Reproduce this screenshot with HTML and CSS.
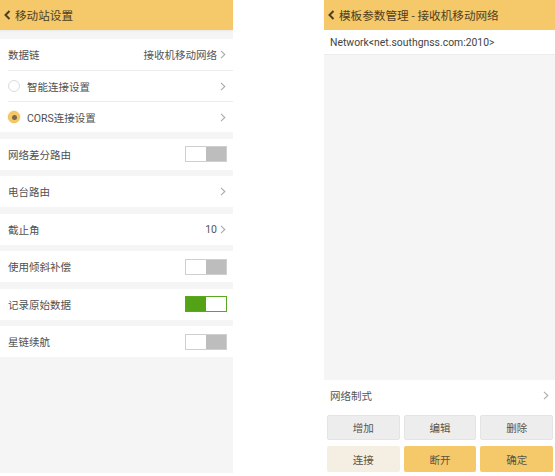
FILE: index.html
```html
<!DOCTYPE html>
<html>
<head>
<meta charset="utf-8">
<link rel="stylesheet" href="styles.css">
</head>
<body>
<div class="screen left">
  <div class="header">
    <svg class="back" width="7" height="10" viewBox="0 0 7 10"><polyline points="5.5,1 1.5,5 5.5,9" fill="none" stroke="#4e3f22" stroke-width="2"/></svg>
    <span>移动站设置</span>
  </div>
  <div class="group first">
    <div class="row"><span>数据链</span><span class="val">接收机移动网络<svg class="chev" width="6" height="9" viewBox="0 0 6 9"><polyline points="1,0.8 4.8,4.5 1,8.2" fill="none" stroke="#ababab" stroke-width="1.1"/></svg></span></div>
    <div class="row"><span class="lab"><b class="radio"></b>智能连接设置</span><svg class="chev" width="6" height="9" viewBox="0 0 6 9"><polyline points="1,0.8 4.8,4.5 1,8.2" fill="none" stroke="#ababab" stroke-width="1.1"/></svg></div>
    <div class="row"><span class="lab"><b class="radio on"></b>CORS连接设置</span><svg class="chev" width="6" height="9" viewBox="0 0 6 9"><polyline points="1,0.8 4.8,4.5 1,8.2" fill="none" stroke="#ababab" stroke-width="1.1"/></svg></div>
  </div>
  <div class="group">
    <div class="row"><span>网络差分路由</span><span class="tog"><i></i><i></i></span></div>
  </div>
  <div class="group">
    <div class="row"><span>电台路由</span><svg class="chev" width="6" height="9" viewBox="0 0 6 9"><polyline points="1,0.8 4.8,4.5 1,8.2" fill="none" stroke="#ababab" stroke-width="1.1"/></svg></div>
  </div>
  <div class="group">
    <div class="row"><span>截止角</span><span class="val">10<svg class="chev" width="6" height="9" viewBox="0 0 6 9"><polyline points="1,0.8 4.8,4.5 1,8.2" fill="none" stroke="#ababab" stroke-width="1.1"/></svg></span></div>
  </div>
  <div class="group">
    <div class="row"><span>使用倾斜补偿</span><span class="tog"><i></i><i></i></span></div>
  </div>
  <div class="group">
    <div class="row"><span>记录原始数据</span><span class="tog on"><i></i><i></i></span></div>
  </div>
  <div class="group">
    <div class="row"><span>星链续航</span><span class="tog"><i></i><i></i></span></div>
  </div>
</div>
<div class="gapcol"></div>
<div class="screen right">
  <div class="header">
    <svg class="back" width="7" height="10" viewBox="0 0 7 10"><polyline points="5.5,1 1.5,5 5.5,9" fill="none" stroke="#4e3f22" stroke-width="2"/></svg>
    <span>模板参数管理 - 接收机移动网络</span>
  </div>
  <div class="netrow">Network&lt;net.southgnss.com:2010&gt;</div>
  <div class="fill"></div>
  <div class="modrow"><span>网络制式</span><svg class="chev" width="6" height="9" viewBox="0 0 6 9"><polyline points="1,0.8 4.8,4.5 1,8.2" fill="none" stroke="#ababab" stroke-width="1.1"/></svg></div>
  <div class="btns">
    <div class="btn gray">增加</div>
    <div class="btn gray">编辑</div>
    <div class="btn gray">删除</div>
    <div class="btn cream">连接</div>
    <div class="btn gold">断开</div>
    <div class="btn gold">确定</div>
  </div>
</div>
</body>
</html>
```

FILE: styles.css
```css
* { box-sizing: border-box; margin: 0; padding: 0; }
html, body { width: 555px; height: 476px; background: #fff; overflow: hidden; }
body {
  display: flex;
  font-family: Roboto, "Noto Sans CJK SC", sans-serif;
  color: #505050;
  font-size: 10.5px;
}
i { font-style: normal; }
b { font-weight: normal; }

.screen { display: flex; flex-direction: column; }
.left { width: 233px; height: 473px; background: #f5f5f5; }
.gapcol { width: 91px; }
.right { width: 231px; height: 476px; background: #f5f5f5; }

.header {
  height: 30px;
  background: #f5c86a;
  display: flex;
  align-items: center;
  padding-left: 4px;
  color: #4e3f22;
  font-size: 11.6px;
  box-shadow: 0 1px 2px rgba(0,0,0,0.06);
}
.header .back { margin-right: 4px; }

.group { background: #fff; margin-top: 6.5px; }
.group.first { margin-top: 9px; }
.row {
  height: 31px;
  margin-left: 8px;
  padding-right: 7px;
  display: flex;
  align-items: center;
  justify-content: space-between;
}
.row + .row { border-top: 1px solid #ececec; }
.val { display: flex; align-items: center; color: #555; }
.chev { margin-left: 3px; flex: none; }
.lab { display: flex; align-items: center; }

.radio {
  width: 12px; height: 12px; border-radius: 50%;
  border: 1px solid #dcdcdc; background: #fff;
  margin-right: 7px; display: flex; align-items: center; justify-content: center;
}
.radio.on { background: #f5c86a; border-color: #f0c058; box-shadow: 0 0 2px #f5d88a; }
.radio.on::after { content: ""; width: 5px; height: 5px; border-radius: 50%; background: #7a6a4a; }

.tog {
  width: 42px; height: 16px; display: flex;
  border: 1px solid #cfcfcf; margin-right: -1px;
}
.tog i { flex: 1; }
.tog i:first-child { background: #fff; }
.tog i:last-child { background: #bdbdbd; }
.tog.on { border-color: #5aa820; }
.tog.on i:first-child { background: #54a316; }
.tog.on i:last-child { background: #fff; }

.netrow {
  height: 25px; background: #fff; display: flex; align-items: center;
  padding-left: 6px; font-size: 10.4px; color: #444;
  border-bottom: 1px solid #ececec;
}
.fill { flex: 1; }
.modrow {
  height: 30px; background: #fff; display: flex; align-items: center;
  justify-content: space-between; padding: 0 6px; color: #555;
}
.btns {
  background: #fff;
  display: grid;
  grid-template-columns: repeat(3, 1fr);
  grid-template-rows: 25px 26px;
  column-gap: 4px; row-gap: 6px;
  padding: 5px 2px 4px 3px;
}
.btn { display: flex; align-items: center; justify-content: center; border-radius: 2px; color: #5a5448; font-size: 10.5px; }
.btn.gray { background: #ededed; border: 1px solid #e4e4e4; }
.btn.cream { background: #f4efe2; }
.btn.gold { background: #f5c86a; }
```
